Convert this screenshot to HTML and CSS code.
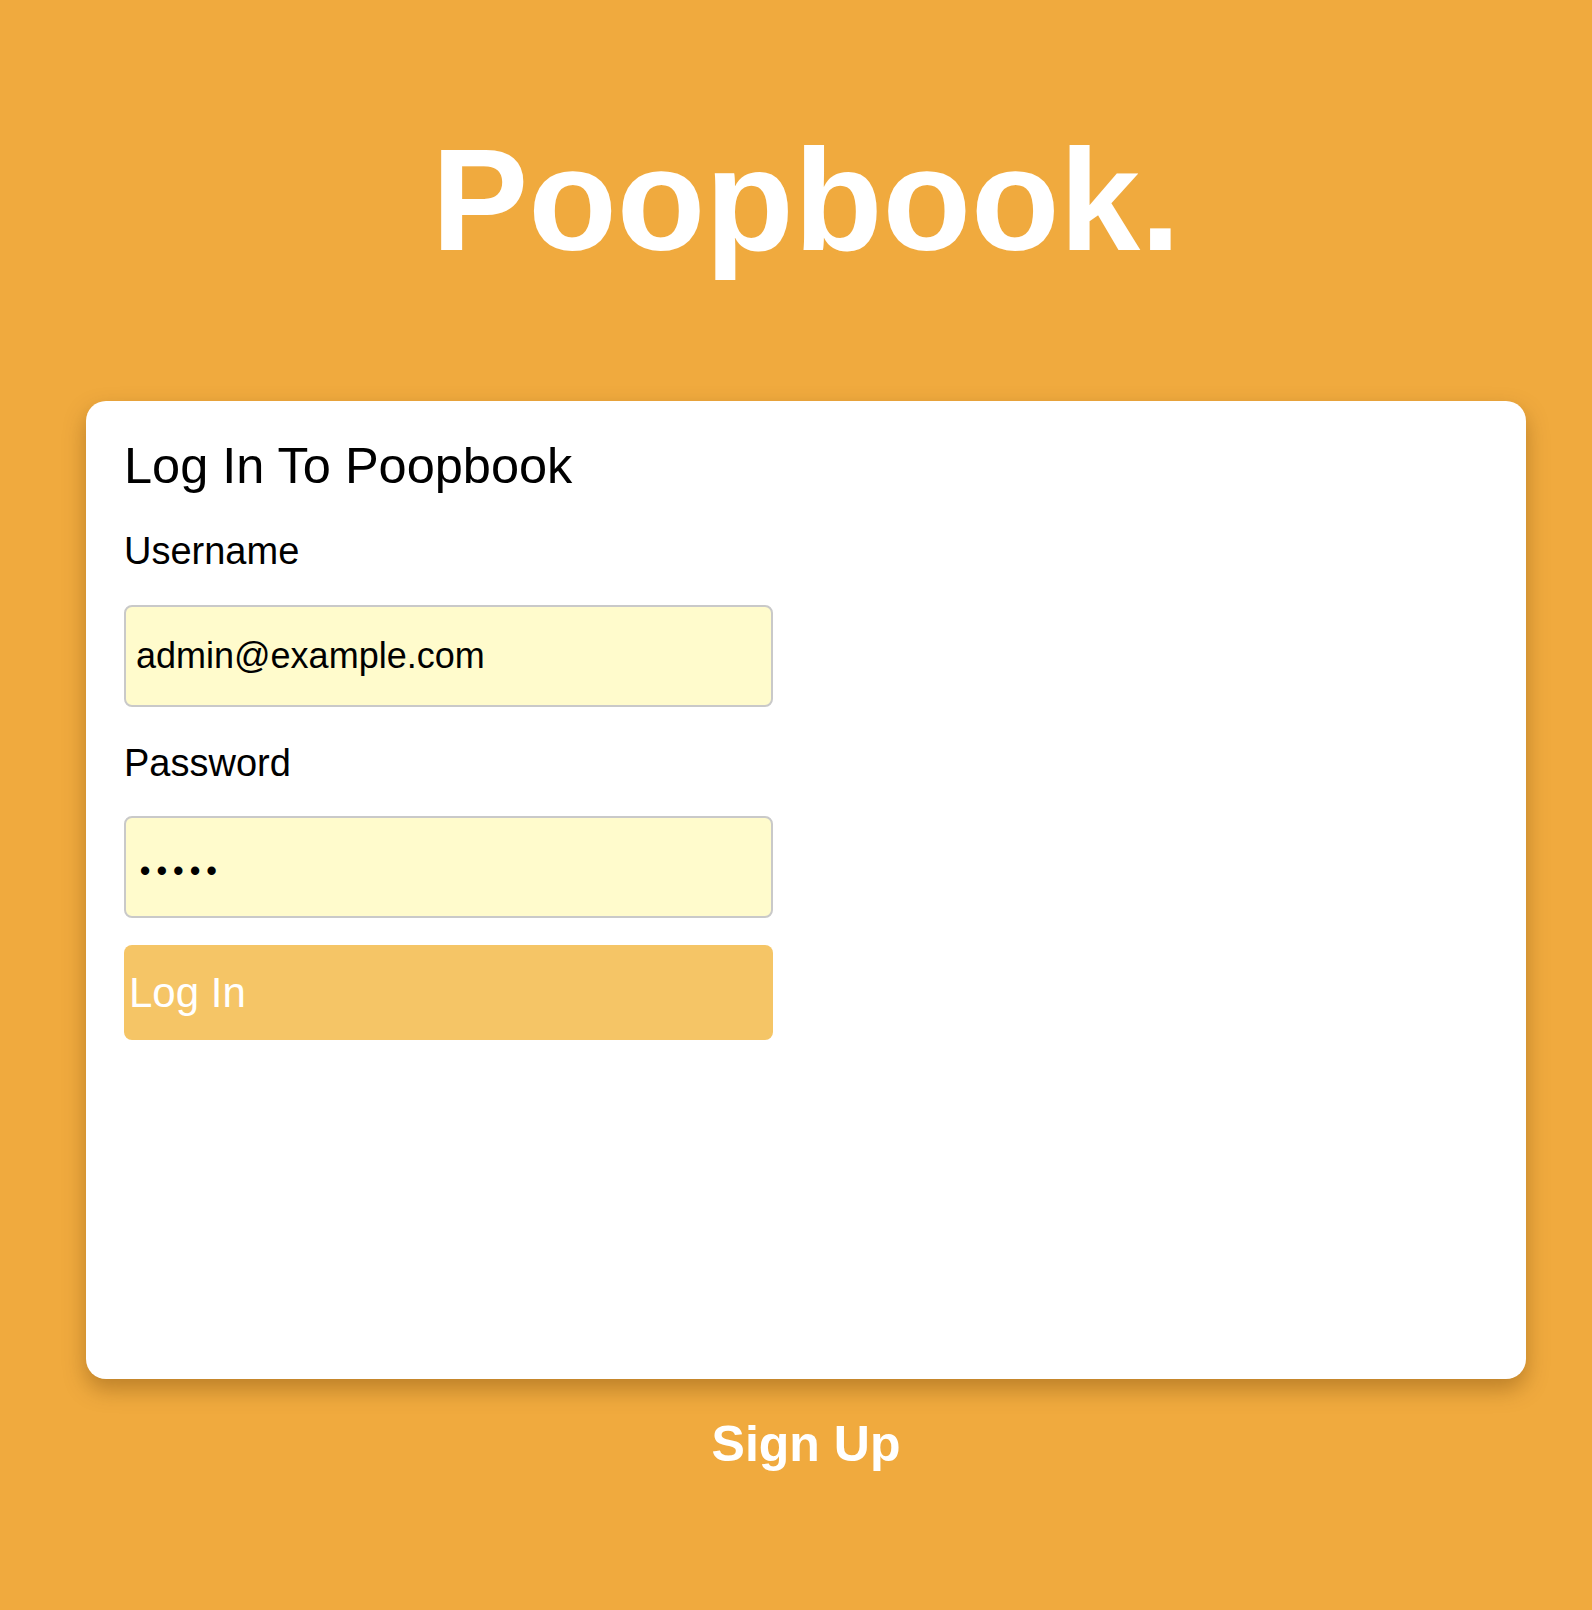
FILE: index.html
```html
<!DOCTYPE html>
<html lang="en">
<head>
<meta charset="utf-8">
<title>Poopbook</title>
<link rel="stylesheet" href="styles.css">
</head>
<body>
<div class="page">
  <h1 class="brand">Poopbook.</h1>
  <main class="card">
    <h2 class="card-title">Log In To Poopbook</h2>
    <form class="login-form">
      <label class="field-label field-label-user" for="username">Username</label>
      <input class="field-input field-input-user" id="username" type="text" value="admin@example.com">
      <label class="field-label field-label-pass" for="password">Password</label>
      <input class="field-input field-input-pass" id="password" type="password" value="admin">
      <button class="login-btn" type="button">Log In</button>
    </form>
  </main>
  <a class="signup" href="#">Sign Up</a>
</div>
</body>
</html>
```

FILE: styles.css
```css
html, body {
  margin: 0;
  padding: 0;
}
body {
  background: #f0aa3e;
  font-family: "Liberation Sans", Arial, Helvetica, sans-serif;
  min-height: 1610px;
}
.page {
  padding: 0 66px 0 86px;
  display: flex;
  flex-direction: column;
}
.brand {
  margin: 128px 0 129px;
  font-size: 145px;
  line-height: 144px;
  font-weight: 700;
  color: #ffffff;
  text-align: center;
}
.card {
  background: #ffffff;
  border-radius: 20px;
  box-shadow: 0 10px 22px rgba(90, 50, 0, 0.35);
  height: 978px;
  box-sizing: border-box;
  padding: 40px 38px;
}
.card-title {
  margin: 0;
  font-size: 50.5px;
  line-height: 50px;
  font-weight: 400;
  color: #000;
}
.login-form {
  display: flex;
  flex-direction: column;
  align-items: flex-start;
  width: 649px;
}
.field-label {
  font-size: 38px;
  line-height: 38px;
  color: #000;
}
.field-label-user {
  margin-top: 41px;
}
.field-label-pass {
  margin-top: 37px;
}
.field-input {
  width: 649px;
  height: 102px;
  box-sizing: border-box;
  border: 2.5px solid #c9c9c9;
  border-radius: 8px;
  background: #fffbcc;
  font-family: "Liberation Sans", Arial, Helvetica, sans-serif;
  font-size: 36px;
  color: #000;
  padding: 0 10px;
  outline: none;
}
.field-input-user {
  margin-top: 35px;
}
.field-input-pass {
  margin-top: 34px;
  font-size: 29px;
  font-weight: 700;
  letter-spacing: 6.5px;
  padding: 8px 10px 0 14px;
}
.login-btn {
  margin-top: 27px;
  width: 649px;
  height: 95px;
  border: none;
  border-radius: 8px;
  background: #f5c566;
  color: #ffffff;
  font-family: "Liberation Sans", Arial, Helvetica, sans-serif;
  font-size: 42px;
  text-align: left;
  padding: 0 5px;
  cursor: pointer;
}
.signup {
  margin-top: 40px;
  align-self: center;
  font-size: 50px;
  line-height: 50px;
  font-weight: 700;
  color: #ffffff;
  text-decoration: none;
}
```
